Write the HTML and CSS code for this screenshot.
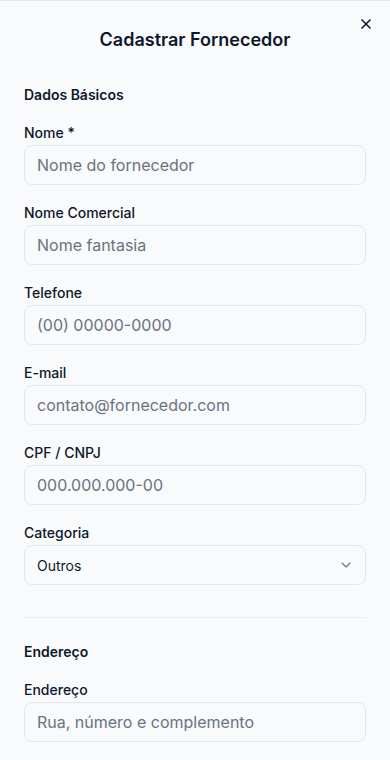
FILE: index.html
```html
<!DOCTYPE html>
<html lang="pt-BR">
<head>
<meta charset="utf-8">
<title>Cadastrar Fornecedor</title>
<link rel="stylesheet" href="styles.css">
</head>
<body>
<div class="sheet">
  <header class="sheet-header">
    <h1 class="sheet-title">Cadastrar Fornecedor</h1>
    <button class="close-btn" aria-label="Fechar">
      <svg width="16" height="16" viewBox="0 0 24 24" fill="none" stroke="currentColor" stroke-width="2.5" stroke-linecap="round" stroke-linejoin="round"><path d="M18 6 6 18"/><path d="m6 6 12 12"/></svg>
    </button>
  </header>
  <form class="form">
    <section class="section">
      <h2 class="section-title">Dados Básicos</h2>
      <div class="field">
        <label class="label">Nome *</label>
        <input class="input" type="text" placeholder="Nome do fornecedor">
      </div>
      <div class="field">
        <label class="label">Nome Comercial</label>
        <input class="input" type="text" placeholder="Nome fantasia">
      </div>
      <div class="field">
        <label class="label">Telefone</label>
        <input class="input" type="text" placeholder="(00) 00000-0000">
      </div>
      <div class="field">
        <label class="label">E-mail</label>
        <input class="input" type="text" placeholder="contato@fornecedor.com">
      </div>
      <div class="field">
        <label class="label">CPF / CNPJ</label>
        <input class="input" type="text" placeholder="000.000.000-00">
      </div>
      <div class="field">
        <label class="label">Categoria</label>
        <div class="select">
          <span class="select-value">Outros</span>
          <svg class="chevron" width="16" height="16" viewBox="0 0 24 24" fill="none" stroke="currentColor" stroke-width="1.6" stroke-linecap="round" stroke-linejoin="round"><path d="m6 9 6 6 6-6"/></svg>
        </div>
      </div>
    </section>
    <hr class="divider">
    <section class="section">
      <h2 class="section-title">Endereço</h2>
      <div class="field">
        <label class="label">Endereço</label>
        <input class="input" type="text" placeholder="Rua, número e complemento">
      </div>
    </section>
  </form>
</div>
</body>
</html>
```
FILE: styles.css
```css
* { box-sizing: border-box; }
html, body {
  margin: 0;
  padding: 0;
  background: #f8fafc;
  font-family: Inter, "Noto Sans", sans-serif;
  color: #0f172a;
  overflow: hidden;
}
.sheet {
  position: relative;
  border-top: 1px solid #e2e8f0;
  min-height: 760px;
}
.sheet-header {
  padding: 28px 24px 0;
  text-align: center;
}
.sheet-title {
  margin: 0;
  font-size: 18px;
  line-height: 22px;
  font-weight: 600;
  color: #0f172a;
}
.close-btn {
  position: absolute;
  top: 15px;
  right: 16px;
  width: 16px;
  height: 16px;
  padding: 0;
  border: none;
  background: none;
  color: #0f172a;
  display: flex;
  align-items: center;
  justify-content: center;
}
.form {
  padding: 34px 24px 0;
}
.section {
  display: flex;
  flex-direction: column;
  gap: 18px;
}
.section-title {
  margin: 0;
  font-size: 14px;
  line-height: 20px;
  font-weight: 600;
  color: #0f172a;
}
.field {
  display: flex;
  flex-direction: column;
  gap: 2px;
}
.label {
  font-size: 14px;
  line-height: 20px;
  font-weight: 500;
  color: #0f172a;
}
.input, .select {
  height: 40px;
  width: 100%;
  border: 1px solid #e2e8f0;
  border-radius: 8px;
  background: #f8fafc;
  padding: 0 12px;
  font-family: Inter, "Noto Sans", sans-serif;
  font-size: 16px;
  color: #0f172a;
  outline: none;
}
.input::placeholder {
  color: #6b7280;
}
.select {
  display: flex;
  align-items: center;
  justify-content: space-between;
  font-size: 14px;
}
.chevron {
  color: #6b7280;
  margin-right: -1px;
}
.divider {
  border: none;
  border-top: 1px solid #e9edf2;
  margin: 32px 0 24px;
}
```
